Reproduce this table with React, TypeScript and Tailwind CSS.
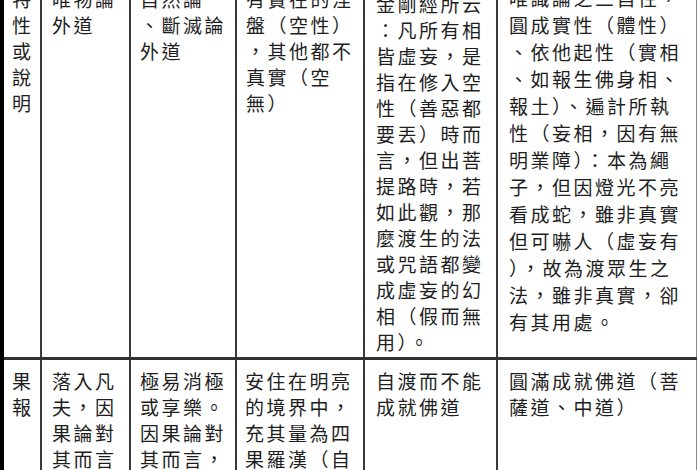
import React from "react";

type Cell = {
  lines: string[];
  width: string;
  pad: string;
  leading: string;
  last?: boolean;
};

const top: Cell[] = [
  { lines: ["特", "性", "或", "說", "明"], width: "w-[38px]", pad: "pl-[8px] pt-[4px]", leading: "leading-[26px]" },
  { lines: ["唯物論", "外道"], width: "w-[89px]", pad: "pl-[10px] pt-[4px]", leading: "leading-[26px]" },
  { lines: ["自然論", "、斷滅論", "外道"], width: "w-[106px]", pad: "pl-[9px] pt-[4px]", leading: "leading-[26px]" },
  {
    lines: ["有實在的涅", "盤（空性）", "，其他都不", "真實（空", "無）"],
    width: "w-[128px]",
    pad: "pl-[9px] pt-[4px]",
    leading: "leading-[26px]",
  },
  {
    lines: [
      "金剛經所云",
      "：凡所有相",
      "皆虛妄，是",
      "指在修入空",
      "性（善惡都",
      "要丟）時而",
      "言，但出菩",
      "提路時，若",
      "如此觀，那",
      "麼渡生的法",
      "或咒語都變",
      "成虛妄的幻",
      "相（假而無",
      "用）。",
    ],
    width: "w-[133px]",
    pad: "pl-[11px] pt-[9px]",
    leading: "leading-[26px]",
  },
  {
    lines: [
      "唯識論之三自性，",
      "圓成實性（體性）",
      "、依他起性（實相",
      "、如報生佛身相、",
      "報土）、遍計所執",
      "性（妄相，因有無",
      "明業障）：本為繩",
      "子，但因燈光不亮",
      "看成蛇，雖非真實",
      "但可嚇人（虛妄有",
      "），故為渡眾生之",
      "法，雖非真實，卻",
      "有其用處。",
    ],
    width: "w-[199px]",
    pad: "pl-[11px] pt-[2px]",
    leading: "leading-[27px]",
    last: true,
  },
];

const bottom: Cell[] = [
  { lines: ["果", "報"], width: "w-[38px]", pad: "pl-[8px] pt-[8px]", leading: "leading-[26px]" },
  { lines: ["落入凡", "夫，因", "果論對", "其而言"], width: "w-[89px]", pad: "pl-[10px] pt-[8px]", leading: "leading-[26px]" },
  { lines: ["極易消極", "或享樂。", "因果論對", "其而言，"], width: "w-[106px]", pad: "pl-[9px] pt-[8px]", leading: "leading-[26px]" },
  {
    lines: ["安住在明亮", "的境界中，", "充其量為四", "果羅漢（自"],
    width: "w-[128px]",
    pad: "pl-[8px] pt-[8px]",
    leading: "leading-[26px]",
  },
  { lines: ["自渡而不能", "成就佛道"], width: "w-[133px]", pad: "pl-[11px] pt-[8px]", leading: "leading-[26px]" },
  {
    lines: ["圓滿成就佛道（菩", "薩道、中道）"],
    width: "w-[199px]",
    pad: "pl-[11px] pt-[8px]",
    leading: "leading-[26px]",
    last: true,
  },
];

function Row({ cells, className }: { cells: Cell[]; className: string }) {
  return (
    <div className={`flex ${className}`}>
      {cells.map((c, i) => (
        <div
          key={i}
          className={`${c.width} ${c.pad} ${c.leading} shrink-0 ${
            c.last ? "border-r border-[#8a8a8a]" : "border-r-2 border-[#3a3a3a]"
          }`}
        >
          {c.lines.map((l, j) => (
            <div key={j} className="whitespace-nowrap">
              {l}
            </div>
          ))}
        </div>
      ))}
    </div>
  );
}

export default function App() {
  return (
    <div className="h-[470px] w-[700px] overflow-hidden bg-white">
      <div
        className="-mt-[18px] ml-0 w-[700px] border-l-4 border-black text-[19px] tracking-[2.5px] text-[#1e1e1e]"
        style={{ fontFamily: '"Noto Sans CJK TC", "Noto Sans CJK SC", sans-serif' }}
      >
        <Row cells={top} className="h-[378px] w-[693px] border-b-[3px] border-[#333]" />
        <Row cells={bottom} className="h-[200px] w-[693px]" />
      </div>
    </div>
  );
}
